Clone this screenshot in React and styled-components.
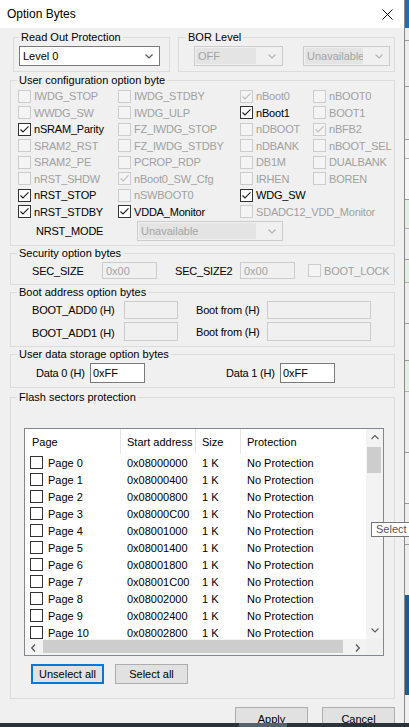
import React from "react";
import styled, { createGlobalStyle } from "styled-components";

const GlobalStyle = createGlobalStyle`
  html, body {
    margin: 0;
    padding: 0;
    background: #f0f0f0;
  }
  body {
    font-family: "Liberation Sans", Arial, sans-serif;
    font-size: 11px;
    color: #000;
  }
`;

const userBits = [
  [["IWDG_STOP"], ["IWDG_STDBY"], ["nBoot0", 0, 1], ["nBOOT0"]],
  [["WWDG_SW"], ["IWDG_ULP"], ["nBoot1", 1, 1], ["BOOT1"]],
  [["nSRAM_Parity", 1, 1], ["FZ_IWDG_STOP"], ["nDBOOT"], ["nBFB2", 0, 1]],
  [["SRAM2_RST"], ["FZ_IWDG_STDBY"], ["nDBANK"], ["nBOOT_SEL"]],
  [["SRAM2_PE"], ["PCROP_RDP"], ["DB1M"], ["DUALBANK"]],
  [["nRST_SHDW"], ["nBoot0_SW_Cfg", 0, 1], ["IRHEN"], ["BOREN"]],
  [["nRST_STOP", 1, 1], ["nSWBOOT0"], ["WDG_SW", 1, 1], null],
  [["nRST_STDBY", 1, 1], ["VDDA_Monitor", 1, 1], ["SDADC12_VDD_Monitor", 0, 0, 2]],
];

const pages = Array.from({ length: 11 }, (_, i) => ({
  name: `Page ${i}`,
  addr: "0x" + (0x08000000 + i * 0x400).toString(16).toUpperCase().padStart(8, "0"),
}));

const stripBands = [
  [28, "#1f6db3"], [12, "#eeeeee"], [1, "#9a9a9a"], [45, "#eeeeee"], [1, "#9a9a9a"],
  [52, "#eeeeee"], [1, "#9a9a9a"], [18, "#f4f4f4"], [1, "#b0b0b0"], [40, "#f7f7f7"],
  [1, "#9a9a9a"], [28, "#e3efe3"], [1, "#b0b0b0"], [30, "#eeeeee"], [1, "#9a9a9a"],
  [22, "#e3efe3"], [1, "#b0b0b0"], [40, "#eeeeee"], [1, "#9a9a9a"], [36, "#eeeeee"],
  [1, "#9a9a9a"], [30, "#e3efe3"], [1, "#b0b0b0"], [60, "#eeeeee"], [1, "#9a9a9a"],
  [50, "#f2f2f2"], [1, "#9a9a9a"], [40, "#eeeeee"], [1, "#9a9a9a"], [50, "#eeeeee"],
  [100, "#1b5c95"],
];

const Chevron = ({ dir = "down", color = "#555" }) => {
  const pts = {
    down: "0.5,0.5 4,4 7.5,0.5",
    up: "0.5,4 4,0.5 7.5,4",
  };
  return (
    <svg width="8" height="5" viewBox="0 0 8 5">
      <polyline points={pts[dir]} fill="none" stroke={color} strokeWidth="1.2" />
    </svg>
  );
};

const SideChevron = ({ dir }) => (
  <svg width="5" height="8" viewBox="0 0 5 8">
    <polyline
      points={dir === "left" ? "4,0.5 0.8,4 4,7.5" : "1,0.5 4.2,4 1,7.5"}
      fill="none"
      stroke="#606060"
      strokeWidth="1.4"
    />
  </svg>
);

const CheckBox = ({ on = true, checked }) => (
  <Box $on={on}>
    {checked ? (
      <svg width="11" height="11" viewBox="0 0 11 11">
        <polyline
          points="1.5,5.5 4,8 9.5,2.3"
          fill="none"
          stroke={on ? "#222" : "#bdbdbd"}
          strokeWidth="1.2"
        />
      </svg>
    ) : null}
  </Box>
);

const Select = ({ w, value, disabled }) => (
  <SelectBox $w={w} $disabled={disabled}>
    <SelectText $disabled={disabled}>{value}</SelectText>
    <Chevron color={disabled ? "#b4b4b4" : "#555"} />
  </SelectBox>
);

export default function App() {
  return (
    <Screen>
      <GlobalStyle />
      <Main>
        <Dialog>
          <TitleBar>
            <Title>Option Bytes</Title>
            <Close>
              <svg width="11" height="11" viewBox="0 0 11 11">
                <path d="M0.5 0.5 L10.5 10.5 M10.5 0.5 L0.5 10.5" stroke="#111" strokeWidth="1" />
              </svg>
            </Close>
          </TitleBar>

          <Body>
            <TopRow>
              <Group $w="157px" $ml="3px" $pb="5px">
                <Caption $ml="5px">Read Out Protection</Caption>
                <Inline $ml="5px" $mt="2px">
                  <Select w="141px" value="Level 0" />
                </Inline>
              </Group>
              <Group $w="217px" $pb="5px">
                <Caption $ml="7px">BOR Level</Caption>
                <Inline $ml="15px" $mt="2px" $gap="20px">
                  <Select w="89px" value="OFF" disabled />
                  <Select w="87px" value="Unavailable" disabled />
                </Inline>
              </Group>
            </TopRow>

            <Group $mt="8px" $pb="4px">
              <Caption>User configuration option byte</Caption>
              <BitGrid>
                {userBits.map((row) =>
                  row.map((bit, i) =>
                    bit ? (
                      <Bit key={bit[0]} $span={bit[3] || 1}>
                        <CheckBox on={!!bit[1]} checked={!!bit[2]} />
                        <Label $on={!!bit[1]}>{bit[0]}</Label>
                      </Bit>
                    ) : (
                      <span key={"empty" + i} />
                    )
                  )
                )}
              </BitGrid>
              <Inline $ml="25px" $mt="1px">
                <Label $w="101px">NRST_MODE</Label>
                <Select w="146px" value="Unavailable" disabled />
              </Inline>
            </Group>

            <Group $mt="7px" $pb="5px">
              <Caption>Security option bytes</Caption>
              <Inline $ml="21px" $mt="2px">
                <Label $w="70px">SEC_SIZE</Label>
                <Field $w="55px" $h="17px" $disabled>0x00</Field>
                <Label $w="65px" $ml="18px">SEC_SIZE2</Label>
                <Field $w="55px" $h="17px" $disabled>0x00</Field>
                <Bit $ml="13px">
                  <CheckBox on={false} />
                  <Label $on={false}>BOOT_LOCK</Label>
                </Bit>
              </Inline>
            </Group>

            <Group $mt="7px" $pb="5px">
              <Caption>Boot address option bytes</Caption>
              <Inline $ml="21px" $mt="2px">
                <Label $w="92px">BOOT_ADD0 (H)</Label>
                <Field $w="54px" $h="18px" $disabled />
                <Label $w="71px" $ml="18px">Boot from (H)</Label>
                <Field $w="104px" $h="18px" $disabled />
              </Inline>
              <Inline $ml="21px" $mt="3px">
                <Label $w="92px" $dy="2px">BOOT_ADD1 (H)</Label>
                <Field $w="54px" $h="19px" $disabled />
                <Label $w="71px" $ml="18px">Boot from (H)</Label>
                <Field $w="104px" $h="19px" $disabled />
              </Inline>
            </Group>

            <Group $mt="7px" $pb="4px">
              <Caption>User data storage option bytes</Caption>
              <Inline $ml="25px" $mt="2px">
                <Label $w="54px">Data 0 (H)</Label>
                <Field $w="55px" $h="20px">0xFF</Field>
                <Label $w="54px" $ml="81px">Data 1 (H)</Label>
                <Field $w="55px" $h="20px">0xFF</Field>
              </Inline>
            </Group>

            <Group $mt="9px" $pb="14px">
              <Caption>Flash sectors protection</Caption>
              <ListBox>
                <ListContent>
                  <ListHeader>
                    <HeadCell $first>Page</HeadCell>
                    <HeadCell>Start address</HeadCell>
                    <HeadCell>Size</HeadCell>
                    <HeadCell>Protection</HeadCell>
                  </ListHeader>
                  {pages.map((p) => (
                    <ListRow key={p.name}>
                      <Cell $first>
                        <CheckBox />
                        <span>{p.name}</span>
                      </Cell>
                      <Cell>{p.addr}</Cell>
                      <Cell>1 K</Cell>
                      <Cell>No Protection</Cell>
                    </ListRow>
                  ))}
                </ListContent>
                <VScroll>
                  <ArrowCell>
                    <Chevron dir="up" color="#606060" />
                  </ArrowCell>
                  <VThumb />
                  <Spacer />
                  <ArrowCell>
                    <Chevron dir="down" color="#606060" />
                  </ArrowCell>
                </VScroll>
                <HScroll>
                  <ArrowCell $w="17px">
                    <SideChevron dir="left" />
                  </ArrowCell>
                  <HThumb />
                  <Spacer />
                  <ArrowCell $w="17px">
                    <SideChevron dir="right" />
                  </ArrowCell>
                </HScroll>
                <Corner />
              </ListBox>
              <Inline $ml="20px" $mt="8px" $gap="11px">
                <Button $focus>Unselect all</Button>
                <Button>Select all</Button>
              </Inline>
            </Group>

            <Footer>
              <Button $h="23px">Apply</Button>
              <Button $h="23px">Cancel</Button>
            </Footer>
          </Body>
        </Dialog>
        <Strip>
          {stripBands.map(([h, c], i) => (
            <Band key={i} $h={h} $c={c} />
          ))}
        </Strip>
      </Main>
      <Taskbar>
        <TaskItem />
      </Taskbar>
      <Tooltip>Select</Tooltip>
    </Screen>
  );
}

const Screen = styled.div`
  position: relative;
  width: 409px;
  height: 727px;
  overflow: hidden;
  display: flex;
  flex-direction: column;
`;

const Main = styled.div`
  display: flex;
  height: 723px;
  overflow: hidden;
`;

const Dialog = styled.div`
  box-sizing: border-box;
  width: 405px;
  flex-shrink: 0;
  background: #f0f0f0;
  border-right: 1px solid #8a8a8a;
`;

const TitleBar = styled.div`
  height: 28px;
  background: #fff;
  display: flex;
  align-items: center;
  justify-content: space-between;
  padding-left: 7px;
`;

const Title = styled.div`
  font-size: 12px;
  color: #000;
`;

const Close = styled.div`
  display: flex;
  width: 11px;
  height: 11px;
  margin-right: 11px;
  margin-top: 1px;
`;

const Body = styled.div`
  padding: 9px 9px 0 10px;
`;

const TopRow = styled.div`
  display: flex;
  gap: 8px;
`;

const Group = styled.div`
  box-sizing: border-box;
  width: ${(p) => p.$w || "auto"};
  margin-left: ${(p) => p.$ml || "0"};
  margin-top: ${(p) => p.$mt || "0"};
  padding-bottom: ${(p) => p.$pb || "4px"};
  border: 1px solid #dcdcdc;
`;

const Caption = styled.div`
  width: fit-content;
  height: 13px;
  line-height: 13px;
  margin: -7px 0 0 ${(p) => p.$ml || "6px"};
  padding: 0 2px;
  background: #f0f0f0;
  white-space: nowrap;
`;

const Inline = styled.div`
  display: flex;
  align-items: center;
  gap: ${(p) => p.$gap || "0"};
  margin-left: ${(p) => p.$ml || "0"};
  margin-top: ${(p) => p.$mt || "0"};
`;

const SelectBox = styled.div`
  box-sizing: border-box;
  width: ${(p) => p.$w};
  height: 20px;
  display: flex;
  align-items: center;
  padding: 0 6px 0 1px;
  border: 1px solid ${(p) => (p.$disabled ? "#cccccc" : "#7a7a7a")};
  background: ${(p) => (p.$disabled ? "#f0f0f0" : "#fff")};
`;

const SelectText = styled.div`
  flex: 1;
  height: 16px;
  line-height: 16px;
  margin-right: ${(p) => (p.$disabled ? "12px" : "6px")};
  padding-left: 2px;
  color: ${(p) => (p.$disabled ? "#a3a3a3" : "#000")};
  background: ${(p) => (p.$disabled ? "#e4e4e4" : "transparent")};
  white-space: nowrap;
  overflow: hidden;
`;

const BitGrid = styled.div`
  display: grid;
  grid-template-columns: 100px 122px 73px 1fr;
  grid-auto-rows: 16.5px;
  margin: 1px 0 0 7px;
`;

const Bit = styled.div`
  display: flex;
  align-items: center;
  gap: 3px;
  grid-column: span ${(p) => p.$span || 1};
  margin-left: ${(p) => p.$ml || "0"};
  white-space: nowrap;
`;

const Box = styled.span`
  box-sizing: border-box;
  display: inline-flex;
  align-items: center;
  justify-content: center;
  width: 13px;
  height: 13px;
  flex-shrink: 0;
  border: 1px solid ${(p) => (p.$on ? "#333" : "#cccccc")};
  background: ${(p) => (p.$on ? "#fff" : "#f4f4f4")};
`;

const Label = styled.span`
  display: inline-block;
  width: ${(p) => p.$w || "auto"};
  margin-left: ${(p) => p.$ml || "0"};
  margin-top: ${(p) => p.$dy || "0"};
  flex-shrink: 0;
  color: ${(p) => (p.$on === false ? "#a0a0a0" : "#000")};
  letter-spacing: -0.2px;
  white-space: nowrap;
`;

const Field = styled.div`
  box-sizing: border-box;
  width: ${(p) => p.$w};
  height: ${(p) => p.$h};
  flex-shrink: 0;
  display: flex;
  align-items: center;
  padding-left: ${(p) => (p.$disabled ? "3px" : "2px")};
  border: 1px solid ${(p) => (p.$disabled ? "#cccccc" : "#7a7a7a")};
  background: ${(p) => (p.$disabled ? "#f0f0f0" : "#fff")};
  color: ${(p) => (p.$disabled ? "#a3a3a3" : "#000")};
`;

const ListBox = styled.div`
  box-sizing: border-box;
  width: 360px;
  height: 228px;
  margin: 24px 0 0 13px;
  border: 1px solid #828790;
  background: #fff;
  display: grid;
  grid-template-columns: 1fr 17px;
  grid-template-rows: 1fr 16px;
`;

const ListContent = styled.div`
  overflow: hidden;
`;

const ListHeader = styled.div`
  display: grid;
  grid-template-columns: 95px 75px 45px 1fr;
  height: 25px;
`;

const HeadCell = styled.div`
  display: flex;
  align-items: center;
  padding-left: ${(p) => (p.$first ? "7px" : "6px")};
  border-left: ${(p) => (p.$first ? "none" : "1px solid #e5e5e5")};
  white-space: nowrap;
`;

const ListRow = styled.div`
  display: grid;
  grid-template-columns: 95px 75px 45px 1fr;
  height: 17px;
`;

const Cell = styled.div`
  display: flex;
  align-items: center;
  gap: 5px;
  padding-left: ${(p) => (p.$first ? "5px" : "7px")};
  white-space: nowrap;
`;

const VScroll = styled.div`
  display: flex;
  flex-direction: column;
  background: #f3f3f3;
`;

const ArrowCell = styled.div`
  display: flex;
  align-items: center;
  justify-content: center;
  width: ${(p) => p.$w || "auto"};
  height: 17px;
  flex-shrink: 0;
`;

const VThumb = styled.div`
  height: 26px;
  margin: 1px 2px 0 1px;
  background: #cdcdcd;
`;

const Spacer = styled.div`
  flex: 1;
`;

const HScroll = styled.div`
  display: flex;
  align-items: flex-start;
  background: #f3f3f3;
  height: 16px;
`;

const HThumb = styled.div`
  width: 300px;
  height: 13px;
  margin: 1px 0 0 1px;
  background: #cdcdcd;
`;

const Corner = styled.div`
  background: #f0f0f0;
`;

const Button = styled.button`
  box-sizing: border-box;
  width: 73px;
  height: ${(p) => p.$h || "20px"};
  padding: 0;
  font-family: "Liberation Sans", Arial, sans-serif;
  font-size: 11px;
  color: #000;
  background: #e1e1e1;
  border: ${(p) => (p.$focus ? "2px solid #0078d7" : "1px solid #adadad")};
`;

const Footer = styled.div`
  display: flex;
  justify-content: flex-end;
  gap: 14px;
  margin-top: 8px;
`;

const Strip = styled.div`
  width: 4px;
  display: flex;
  flex-direction: column;
`;

const Band = styled.div`
  height: ${(p) => p.$h}px;
  flex-shrink: 0;
  background: ${(p) => p.$c};
`;

const Taskbar = styled.div`
  height: 4px;
  display: flex;
  background: #2b3238;
`;

const TaskItem = styled.div`
  width: 48px;
  margin-left: 239px;
  background: #59616a;
`;

const Tooltip = styled.div`
  position: absolute;
  left: 371px;
  top: 522px;
  height: 15px;
  line-height: 13px;
  box-sizing: border-box;
  padding: 0 6px 0 4px;
  border: 1px solid #767676;
  background: #fff;
  color: #575757;
  font-size: 11px;
  white-space: nowrap;
`;
